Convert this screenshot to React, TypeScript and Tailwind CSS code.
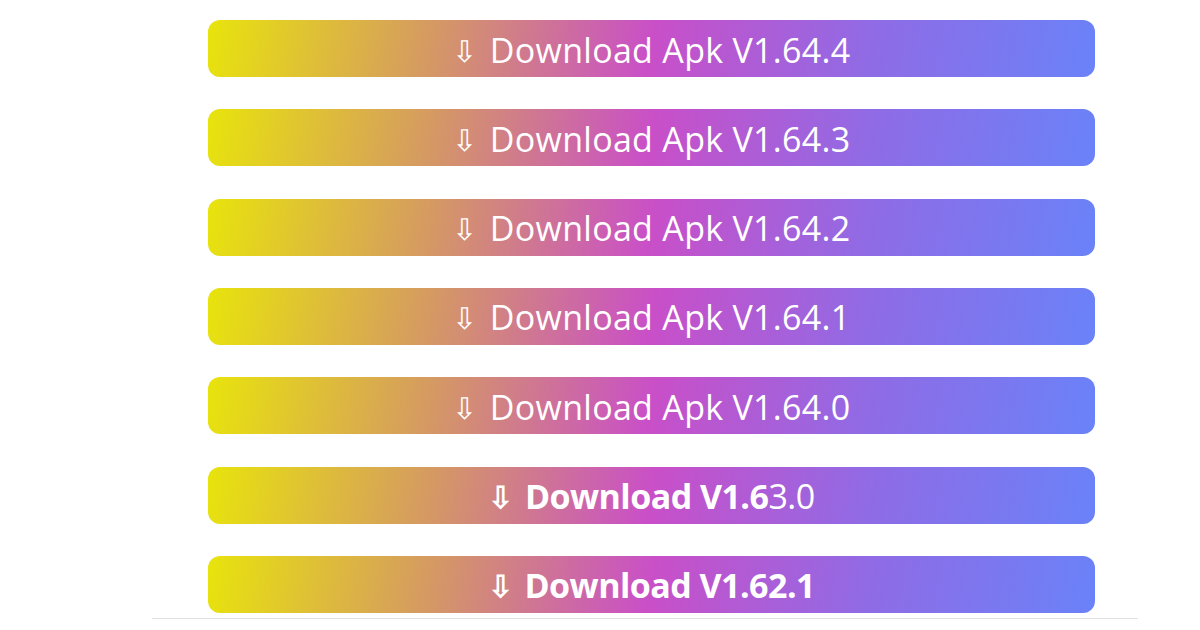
import React from 'react';

const versions: { label: React.ReactNode; bold?: boolean }[] = [
  { label: 'Download Apk V1.64.4' },
  { label: 'Download Apk V1.64.3' },
  { label: 'Download Apk V1.64.2' },
  { label: 'Download Apk V1.64.1' },
  { label: 'Download Apk V1.64.0' },
  {
    label: (
      <>
        Download V1.6<span className="font-normal">3.0</span>
      </>
    ),
    bold: true,
  },
  { label: 'Download V1.62.1', bold: true },
];

const App: React.FC = () => {
  return (
    <div className="w-[1200px] h-[630px] bg-white overflow-hidden font-['Open_Sans',sans-serif]">
      <div className="w-[986px] ml-[152px] pt-[20px] pb-[5px] border-b border-[#e2e2e2]">
        <div className="flex flex-col gap-[32.33px] pl-[56px]">
          {versions.map((v, i) => (
            <a
              key={i}
              href="#"
              className={`w-[887px] h-[57px] pt-[3px] rounded-[12px] flex items-center justify-center text-white text-[34px] bg-[linear-gradient(100deg,#e8e40c_0%,#d59a62_25%,#c94fc8_50%,#8e6ce6_75%,#6a82f8_100%)] ${
                v.bold ? 'font-bold tracking-[-0.55px]' : 'font-normal tracking-[0.3px]'
              }`}
            >
              <span className="mr-[12px] text-[30px]">⇩</span>
              {v.label}
            </a>
          ))}
        </div>
      </div>
    </div>
  );
};

export default App;
